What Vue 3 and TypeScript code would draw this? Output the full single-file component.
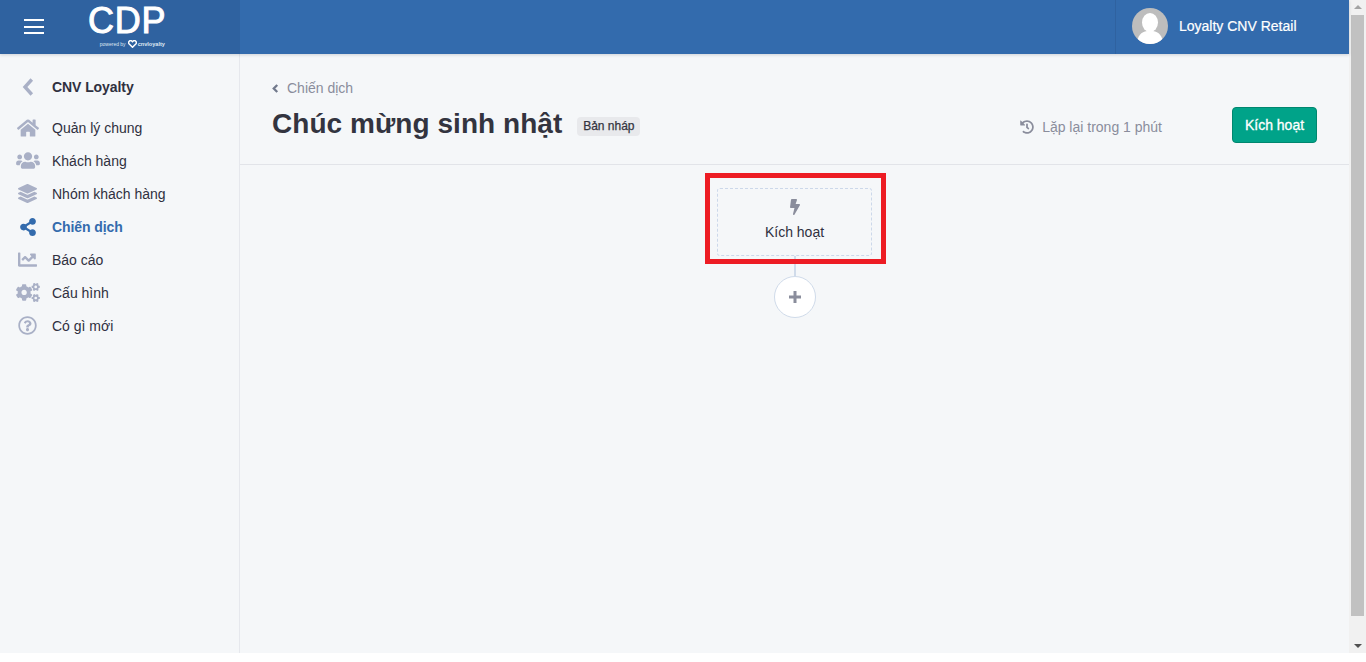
<script setup lang="ts">
interface NavItem { label: string; view: string; d: string; w: number; h: number; active?: boolean }
const nav: NavItem[] = [
  { label: 'Quản lý chung', view: '0 0 576 512', w: 22, h: 20, d: 'M280.37 148.26L96 300.11V464a16 16 0 0 0 16 16l112.06-.29a16 16 0 0 0 15.92-16V368a16 16 0 0 1 16-16h64a16 16 0 0 1 16 16v95.64a16 16 0 0 0 16 16.05L464 480a16 16 0 0 0 16-16V300L295.67 148.26a12.19 12.19 0 0 0-15.3 0zM571.6 251.47L488 182.56V44.05a12 12 0 0 0-12-12h-56a12 12 0 0 0-12 12v72.61L318.47 43a48 48 0 0 0-61 0L4.34 251.47a12 12 0 0 0-1.6 16.9l25.5 31A12 12 0 0 0 45.15 301l235.22-193.74a12.19 12.19 0 0 1 15.3 0L530.9 301a12 12 0 0 0 16.9-1.6l25.5-31a12 12 0 0 0-1.7-16.93z' },
  { label: 'Khách hàng', view: '0 0 640 512', w: 24, h: 19, d: 'M96 224c35.3 0 64-28.7 64-64s-28.7-64-64-64-64 28.7-64 64 28.7 64 64 64zm448 0c35.3 0 64-28.7 64-64s-28.7-64-64-64-64 28.7-64 64 28.7 64 64 64zm32 32h-64c-17.6 0-33.5 7.1-45.1 18.6 40.3 22.1 68.9 62 75.1 109.4h66c17.7 0 32-14.3 32-32v-32c0-35.3-28.7-64-64-64zm-256 0c61.9 0 112-50.1 112-112S381.9 32 320 32 208 82.1 208 144s50.1 112 112 112zm76.8 32h-8.3c-20.8 10-43.9 16-68.5 16s-47.6-6-68.5-16h-8.3C179.6 288 128 339.6 128 403.2V432c0 26.5 21.5 48 48 48h288c26.5 0 48-21.5 48-48v-28.8c0-63.6-51.6-115.2-115.2-115.2zm-223.7-13.4C161.5 263.1 145.6 256 128 256H64c-35.3 0-64 28.7-64 64v32c0 17.7 14.3 32 32 32h65.9c6.3-47.4 34.9-87.3 75.2-109.4z' },
  { label: 'Nhóm khách hàng', view: '0 0 512 512', w: 19, h: 19, d: 'M12.41 148.02l232.94 105.67c6.8 3.09 14.49 3.09 21.29 0l232.94-105.67c16.55-7.51 16.55-32.52 0-40.03L266.65 2.31a25.607 25.607 0 0 0-21.29 0L12.41 107.98c-16.55 7.51-16.55 32.53 0 40.04zm487.18 88.28l-58.09-26.33-161.64 73.27c-7.56 3.43-15.59 5.17-23.86 5.17s-16.29-1.74-23.86-5.17L70.51 209.97l-58.1 26.33c-16.55 7.5-16.55 32.5 0 40l232.94 105.59c6.8 3.08 14.49 3.08 21.29 0L499.59 276.3c16.55-7.5 16.55-32.5 0-40zm0 127.8l-57.87-26.23-161.86 73.37c-7.56 3.43-15.59 5.17-23.86 5.17s-16.29-1.74-23.86-5.17L70.29 337.87 12.41 364.1c-16.55 7.5-16.55 32.5 0 40l232.94 105.59c6.8 3.08 14.49 3.08 21.29 0L499.59 404.1c16.55-7.5 16.55-32.5 0-40z' },
  { label: 'Chiến dịch', view: '0 0 448 512', w: 16, h: 18, active: true, d: 'M352 320c-22.608 0-43.387 7.819-59.79 20.895l-102.486-64.054a96.551 96.551 0 0 0 0-41.683l102.486-64.054C308.613 184.181 329.392 192 352 192c53.019 0 96-42.981 96-96S405.019 0 352 0s-96 42.981-96 96c0 7.158.79 14.13 2.276 20.841L155.79 180.895C139.387 167.819 118.608 160 96 160c-53.019 0-96 42.981-96 96s42.981 96 96 96c22.608 0 43.387-7.819 59.79-20.895l102.486 64.054A96.301 96.301 0 0 0 256 416c0 53.019 42.981 96 96 96s96-42.981 96-96-42.981-96-96-96z' },
  { label: 'Báo cáo', view: '0 0 512 512', w: 19, h: 19, d: 'M496 384H64V80c0-8.84-7.16-16-16-16H16C7.16 64 0 71.16 0 80v336c0 17.67 14.33 32 32 32h464c8.84 0 16-7.16 16-16v-32c0-8.84-7.16-16-16-16zM464 96H345.94c-21.38 0-32.09 25.85-16.97 40.97l32.4 32.4L288 242.75l-73.37-73.37c-12.5-12.5-32.76-12.5-45.25 0l-68.69 68.69c-6.25 6.25-6.25 16.38 0 22.63l22.62 22.62c6.25 6.25 16.38 6.25 22.63 0L192 237.25l73.37 73.37c12.5 12.5 32.76 12.5 45.25 0l96-96 32.4 32.4c15.12 15.12 40.97 4.41 40.97-16.97V112c0-8.84-7.16-16-16-16z' },
  { label: 'Cấu hình', view: '0 0 640 512', w: 24, h: 19, d: 'M512.1 191l-8.2 14.3c-3 5.3-9.4 7.5-15.1 5.4-11.8-4.4-22.6-10.7-32.1-18.6-4.6-3.8-5.8-10.5-2.8-15.7l8.2-14.3c-6.9-8-12.3-17.3-15.9-27.4h-16.5c-6 0-11.2-4.3-12.2-10.3-2-12-2.1-24.6 0-37.1 1-6 6.2-10.4 12.2-10.4h16.5c3.6-10.1 9-19.4 15.9-27.4l-8.2-14.3c-3-5.2-1.9-11.9 2.8-15.7 9.5-7.9 20.4-14.2 32.1-18.6 5.7-2.1 12.1.1 15.1 5.4l8.2 14.3c10.5-1.9 21.2-1.9 31.7 0L552 6.3c3-5.3 9.4-7.5 15.1-5.4 11.8 4.4 22.6 10.7 32.1 18.6 4.6 3.8 5.8 10.5 2.8 15.7l-8.2 14.3c6.9 8 12.3 17.3 15.9 27.4h16.5c6 0 11.2 4.3 12.2 10.3 2 12 2.1 24.6 0 37.1-1 6-6.2 10.4-12.2 10.4h-16.5c-3.6 10.1-9 19.4-15.9 27.4l8.2 14.3c3 5.2 1.9 11.9-2.8 15.7-9.5 7.9-20.4 14.2-32.1 18.6-5.7 2.1-12.1-.1-15.1-5.4l-8.2-14.3c-10.4 1.9-21.2 1.9-31.7 0zm-10.5-58.8c38.5 29.6 82.4-14.3 52.8-52.8-38.5-29.7-82.4 14.3-52.8 52.8zM386.3 286.1l33.7 16.8c10.1 5.8 14.5 18.1 10.5 29.1-8.9 24.2-26.4 46.4-42.6 65.8-7.4 8.9-20.2 11.1-30.3 5.3l-29.1-16.8c-16 13.7-34.6 24.6-54.9 31.7v33.6c0 11.6-8.3 21.6-19.7 23.6-24.6 4.2-50.4 4.4-75.9 0-11.5-2-20-11.9-20-23.6V418c-20.3-7.2-38.9-18-54.9-31.7L74 403c-10 5.8-22.9 3.6-30.3-5.3-16.2-19.4-33.3-41.6-42.2-65.7-4-10.9.4-23.2 10.5-29.1l33.3-16.8c-3.9-20.9-3.9-42.4 0-63.4L12 205.8c-10.1-5.8-14.6-18.1-10.5-29 8.9-24.2 26-46.4 42.2-65.8 7.4-8.9 20.2-11.1 30.3-5.3l29.1 16.8c16-13.7 34.6-24.6 54.9-31.7V57.1c0-11.5 8.2-21.5 19.6-23.5 24.6-4.2 50.5-4.4 76-.1 11.5 2 20 11.9 20 23.6v33.6c20.3 7.2 38.9 18 54.9 31.7l29.1-16.8c10-5.8 22.9-3.6 30.3 5.3 16.2 19.4 33.2 41.6 42.1 65.8 4 10.9.1 23.2-10 29.1l-33.7 16.8c3.9 21 3.9 42.5 0 63.5zm-117.6 21.1c59.2-77-28.7-164.9-105.7-105.7-59.2 77 28.7 164.9 105.7 105.7zm243.4 182.7l-8.2 14.3c-3 5.3-9.4 7.5-15.1 5.4-11.8-4.4-22.6-10.7-32.1-18.6-4.6-3.8-5.8-10.5-2.8-15.7l8.2-14.3c-6.9-8-12.3-17.3-15.9-27.4h-16.5c-6 0-11.2-4.3-12.2-10.3-2-12-2.1-24.6 0-37.1 1-6 6.2-10.4 12.2-10.4h16.5c3.6-10.1 9-19.4 15.9-27.4l-8.2-14.3c-3-5.2-1.9-11.9 2.8-15.7 9.5-7.9 20.4-14.2 32.1-18.6 5.7-2.1 12.1.1 15.1 5.4l8.2 14.3c10.5-1.9 21.2-1.9 31.7 0l8.2-14.3c3-5.3 9.4-7.5 15.1-5.4 11.8 4.4 22.6 10.7 32.1 18.6 4.6 3.8 5.8 10.5 2.8 15.7l-8.2 14.3c6.9 8 12.3 17.3 15.9 27.4h16.5c6 0 11.2 4.3 12.2 10.3 2 12 2.1 24.6 0 37.1-1 6-6.2 10.4-12.2 10.4h-16.5c-3.6 10.1-9 19.4-15.9 27.4l8.2 14.3c3 5.2 1.9 11.9-2.8 15.7-9.5 7.9-20.4 14.2-32.1 18.6-5.7 2.1-12.1-.1-15.1-5.4l-8.2-14.3c-10.4 1.9-21.2 1.9-31.7 0zM501.6 431c38.5 29.6 82.4-14.3 52.8-52.8-38.5-29.6-82.4 14.3-52.8 52.8z' },
  { label: 'Có gì mới', view: '0 0 512 512', w: 19, h: 19, d: 'M256 8C119.043 8 8 119.083 8 256c0 136.997 111.043 248 248 248s248-111.003 248-248C504 119.083 392.957 8 256 8zm0 448c-110.532 0-200-89.431-200-200 0-110.495 89.472-200 200-200 110.491 0 200 89.471 200 200 0 110.53-89.431 200-200 200zm107.244-255.2c0 67.052-72.421 68.084-72.421 92.863V300c0 6.627-5.373 12-12 12h-45.647c-6.627 0-12-5.373-12-12v-8.659c0-35.745 27.1-50.034 47.579-61.516 17.561-9.845 28.324-16.541 28.324-29.579 0-17.246-21.999-28.693-39.784-28.693-23.189 0-33.894 10.977-48.942 29.969-4.057 5.12-11.46 6.071-16.666 2.124l-27.824-21.098c-5.107-3.872-6.251-11.066-2.644-16.363C184.846 131.491 214.94 112 261.794 112c49.071 0 101.45 38.304 101.45 88.8zM298 368c0 23.159-18.841 42-42 42s-42-18.841-42-42 18.841-42 42-42 42 18.841 42 42z' },
]
</script>

<template>
  <div class="page">
    <div class="window">
      <header class="topbar">
        <div class="brand">
          <button class="burger" aria-label="menu"><span></span><span></span><span></span></button>
          <div class="logo">
            <div class="logo-main">CDP</div>
            <div class="logo-sub">
              <span>powered by</span>
              <svg viewBox="0 0 24 22" width="9" height="8"><path d="M12 20 3 11a5.5 5.5 0 0 1 0-7.6 5.4 5.4 0 0 1 7.6 0L12 4.8l1.4-1.4a5.4 5.4 0 0 1 7.6 0 5.5 5.5 0 0 1 0 7.6z" fill="none" stroke="#fff" stroke-width="4"/></svg>
              <b>cnvloyalty</b>
            </div>
          </div>
        </div>
        <div class="account">
          <svg class="avatar" viewBox="0 0 36 36" width="36" height="36">
            <defs><clipPath id="av"><circle cx="18" cy="18" r="18"/></clipPath></defs>
            <circle cx="18" cy="18" r="18" fill="#bdbdbd"/>
            <g clip-path="url(#av)" fill="#fff">
              <ellipse cx="18" cy="14.5" rx="8" ry="9.5"/>
              <path d="M5 37c0-9 4-13 10-14h6c6 1 10 5 10 14z"/>
            </g>
          </svg>
          <span>Loyalty CNV Retail</span>
        </div>
      </header>

      <div class="body">
        <aside class="sidebar">
          <div class="side-title">
            <svg viewBox="0 0 12 18" width="12" height="18"><path d="M9.8 1.5 3 9l6.8 7.5" fill="none" stroke="#a9b0c6" stroke-width="3.4"/></svg>
            <strong>CNV Loyalty</strong>
          </div>
          <nav class="menu">
            <a v-for="item in nav" :key="item.label" class="menu-item" :class="{ active: item.active }">
              <span class="menu-icon">
                <svg :viewBox="item.view" :width="item.w" :height="item.h"><path :d="item.d" fill="currentColor"/></svg>
              </span>
              <span>{{ item.label }}</span>
            </a>
          </nav>
        </aside>

        <main class="content">
          <section class="head">
            <div class="head-left">
              <div class="crumb">
                <svg viewBox="0 0 8 10" width="7" height="9"><path d="M6 1 2 5l4 4" fill="none" stroke="#71798c" stroke-width="2.6"/></svg>
                <span>Chiến dịch</span>
              </div>
              <div class="title-row">
                <h1>Chúc mừng sinh nhật</h1>
                <span class="badge">Bản nháp</span>
              </div>
            </div>
            <div class="head-right">
              <div class="repeat">
                <svg viewBox="0 0 512 512" width="14" height="14"><path fill="#8a8d9c" d="M504 255.531c.253 136.64-111.18 248.372-247.82 248.468-59.015.042-113.223-20.53-155.822-54.911-11.077-8.94-11.905-25.541-1.839-35.607l11.267-11.267c8.609-8.609 22.353-9.551 31.891-1.984C173.062 425.135 212.781 440 256 440c101.705 0 184-82.311 184-184 0-101.705-82.311-184-184-184-48.814 0-93.149 18.969-126.068 49.932l50.754 50.754c10.08 10.08 2.941 27.314-11.313 27.314H24c-8.837 0-16-7.163-16-16V38.627c0-14.254 17.234-21.393 27.314-11.314l49.372 49.372C129.209 34.136 189.552 8 256 8c136.81 0 247.747 110.78 248 247.531zm-180.912 78.784l9.823-12.63c8.138-10.463 6.253-25.542-4.21-33.679L288 256.349V152c0-13.255-10.745-24-24-24h-16c-13.255 0-24 10.745-24 24v135.651l65.409 50.874c10.463 8.137 25.541 6.253 33.679-4.21z"/></svg>
                <span>Lặp lại trong 1 phút</span>
              </div>
              <button class="activate">Kích hoạt</button>
            </div>
          </section>

          <section class="canvas">
            <div class="flow">
              <div class="trigger">
                <svg class="bolt" viewBox="0 0 320 512" width="10" height="16"><path fill="#8a8d9c" d="M296 160H180.6l42.6-129.8C227.2 15 215.7 0 200 0H56C44 0 33.8 8.9 32.2 20.8l-32 240C-1.7 275.2 9.5 288 24 288h118.7L96.6 482.5c-3.6 15.2 8 29.5 23.3 29.5 8.4 0 16.4-4.4 20.8-12l176-304c9.3-15.9-2.2-36-20.7-36z"/></svg>
                <span class="trigger-label">Kích hoạt</span>
              </div>
              <div class="connector"></div>
              <button class="add" aria-label="add">
                <svg viewBox="0 0 14 14" width="14" height="14"><path d="M7 1v12M1 7h12" stroke="#8a8d9c" stroke-width="3" fill="none"/></svg>
              </button>
              <div class="highlight"></div>
            </div>
          </section>
        </main>
      </div>
    </div>

    <div class="scrollbar">
      <div class="arrow up"></div>
      <div class="thumb"></div>
      <div class="arrow down"></div>
    </div>
  </div>
</template>

<style>
html, body { background: #fff; }
</style>

<style scoped>
* { box-sizing: border-box; }
.page {
  display: flex;
  height: 653px;
  overflow: hidden;
  font-family: "Liberation Sans", Arial, sans-serif;
  font-size: 14px;
  color: #2f3040;
}
.window { flex: 1; min-width: 0; display: flex; flex-direction: column; background: #f5f7f9; }
.topbar {
  height: 54px;
  flex: none;
  display: flex;
  justify-content: space-between;
  background: #336bad;
  box-shadow: 0 1px 3px rgba(50, 60, 80, .2);
  position: relative;
  color: #fff;
}
.brand {
  width: 240px;
  display: flex;
  align-items: flex-start;
  background: #2f62a0;
}
.burger {
  margin: 19px 0 0 24px;
  width: 20px;
  height: 15px;
  padding: 0;
  border: 0;
  background: none;
  display: flex;
  flex-direction: column;
  justify-content: space-between;
}
.burger span { display: block; height: 2px; background: #fff; }
.logo { margin: 0 0 0 44px; width: 77px; }
.logo-main {
  font-size: 36px;
  line-height: 36px;
  margin-top: 3px;
  -webkit-text-stroke: 1px #fff;
  letter-spacing: .7px;
}
.logo-sub {
  display: flex;
  align-items: center;
  justify-content: flex-end;
  gap: 1px;
  height: 8px;
  margin-top: 1px;
  font-size: 5px;
  white-space: nowrap;
  color: #dfe7f2;
}
.logo-sub span { margin-right: 1px; }
.logo-sub b { font-size: 5.6px; font-weight: 700; }
.account {
  width: 234px;
  border-left: 1px solid #2f62a0;
  display: flex;
  align-items: center;
  gap: 11px;
  padding: 0 0 2px 16px;
  font-size: 14px;
  -webkit-text-stroke: .2px #fff;
}
.body { flex: 1; display: flex; min-height: 0; }
.sidebar { width: 240px; flex: none; border-right: 1px solid #e6e8ed; padding-top: 22px; }
.side-title { display: flex; align-items: center; height: 22px; padding-left: 22px; gap: 18px; }
.side-title strong { font-size: 14px; letter-spacing: -.08px; }
.menu { margin-top: 13px; display: flex; flex-direction: column; }
.menu-item { height: 33px; display: flex; align-items: center; color: #2f3040; }
.menu-icon { width: 52px; padding: 0 12px 0 15px; display: flex; justify-content: center; color: #a9b0c6; }
.menu-item.active { color: #336bad; font-weight: 700; letter-spacing: -.08px; }
.menu-item.active .menu-icon { color: #336bad; }
.content { flex: 1; min-width: 0; display: flex; flex-direction: column; }
.head {
  height: 111px;
  flex: none;
  border-bottom: 1px solid #e2e4e9;
  display: flex;
  justify-content: space-between;
  padding: 24px 32px 0;
}
.crumb { display: flex; align-items: center; gap: 8px; height: 20px; color: #8a8d9c; }
.title-row { display: flex; align-items: center; gap: 15px; margin-top: 7px; height: 38px; }
h1 { margin: 0; font-size: 28px; line-height: 38px; font-weight: 700; color: #33343f; letter-spacing: .05px; }
.badge {
  background: #e8e9ec;
  border-radius: 4px;
  font-size: 12px;
  line-height: 19px;
  height: 19px;
  width: 63px;
  text-align: center;
  margin-top: 4px;
  color: #33343f;
  -webkit-text-stroke: .25px #33343f;
}
.head-right { display: flex; align-items: flex-start; padding-top: 29px; }
.repeat { display: flex; align-items: center; gap: 8px; height: 36px; padding-top: 4px; color: #8a8d9c; margin-right: 70px; }
.activate {
  width: 85px;
  height: 36px;
  background: #00a389;
  border: 1px solid #00876f;
  border-radius: 4px;
  color: #fff;
  font: 400 14px "Liberation Sans", Arial, sans-serif;
  -webkit-text-stroke: .3px #fff;
}
.canvas { flex: 1; display: flex; justify-content: center; }
.flow {
  position: relative;
  width: 155px;
  margin-top: 23px;
  margin-left: -1px;
  display: flex;
  flex-direction: column;
  align-items: center;
}
.trigger {
  width: 155px;
  height: 68px;
  border: 1px dashed #ccd8ea;
  border-radius: 3px;
  display: flex;
  flex-direction: column;
  align-items: center;
  padding-top: 10px;
  gap: 9px;
}
.bolt { margin-left: 1px; }
.trigger-label { margin-left: 1px; }
.connector { width: 2px; height: 20px; margin-left: 1px; background: #d0dbea; }
.add {
  width: 42px;
  height: 42px;
  margin-left: 1px;
  padding: 0;
  border-radius: 50%;
  border: 1px solid #d0dbea;
  background: #fff;
  display: flex;
  align-items: center;
  justify-content: center;
}
.highlight {
  position: absolute;
  left: -12px;
  top: -15px;
  width: 181px;
  height: 91px;
  border: 5px solid #ed1c24;
  pointer-events: none;
}
.scrollbar { width: 17px; flex: none; background: #f1f1f1; display: flex; flex-direction: column; align-items: center; }
.thumb { width: 13px; height: 601px; background: #c1c1c1; }
.arrow { width: 100%; position: relative; }
.arrow::after {
  content: "";
  position: absolute;
  left: 5px;
  border-left: 4px solid transparent;
  border-right: 4px solid transparent;
}
.arrow.up { height: 15px; }
.arrow.up::after { top: 5px; border-bottom: 4px solid #a3a3a3; }
.arrow.down { flex: 1; }
.arrow.down::after { bottom: 5px; border-top: 4px solid #505050; }
</style>
